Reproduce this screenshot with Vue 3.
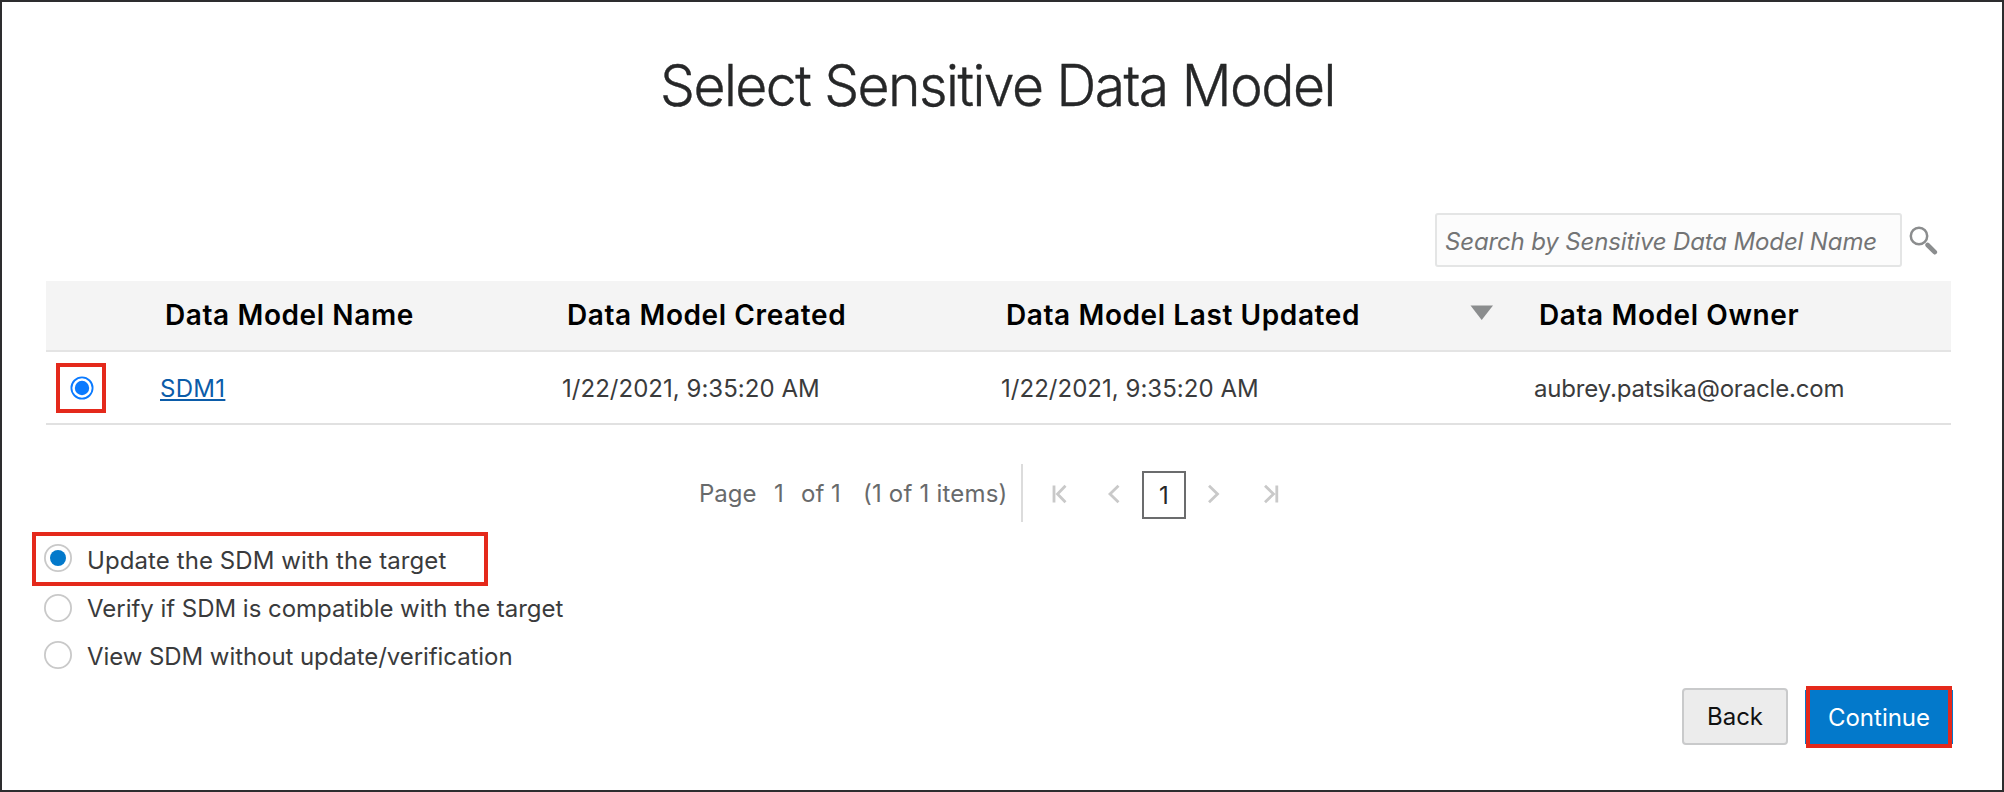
<script setup>
import { ref } from 'vue'

const model = ref('SDM1')
const action = ref('update')
const actions = [
  { id: 'update', label: 'Update the SDM with the target' },
  { id: 'verify', label: 'Verify if SDM is compatible with the target' },
  { id: 'view', label: 'View SDM without update/verification' }
]
const rows = [
  { name: 'SDM1', created: '1/22/2021, 9:35:20 AM', updated: '1/22/2021, 9:35:20 AM', owner: 'aubrey.patsika@oracle.com' }
]
</script>

<template>
  <main class="page">
    <h1><span class="title">Select Sensitive Data Model</span></h1>

    <div class="search">
      <div class="search-box">Search by Sensitive Data Model Name</div>
      <svg class="search-icon" width="30" height="30" viewBox="0 0 30 30">
        <circle cx="11" cy="11" r="8.2" fill="none" stroke="#8b8d8e" stroke-width="2.5" />
        <path d="M19.6 20L26.8 27.2" stroke="#8b8d8e" stroke-width="4.6" stroke-linecap="round" />
      </svg>
    </div>

    <section class="table">
      <div class="row head">
        <span></span>
        <b>Data Model Name</b>
        <b>Data Model Created</b>
        <div class="sorted">
          <b>Data Model Last Updated</b>
          <svg width="24" height="16" viewBox="0 0 24 16"><path d="M0.5 0.5H23L11.7 15Z" fill="#8b8d8e" /></svg>
        </div>
        <b>Data Model Owner</b>
      </div>
      <div v-for="r in rows" :key="r.name" class="row body">
        <span class="mark">
          <svg width="24" height="24" viewBox="0 0 24 24" @click="model = r.name">
            <circle cx="12" cy="12" r="10.6" fill="#fff" stroke="#0a7aff" stroke-width="1.8" />
            <circle v-if="model === r.name" cx="12" cy="12" r="7.2" fill="#0a7aff" />
          </svg>
        </span>
        <span class="cell"><a class="link">{{ r.name }}</a></span>
        <span class="cell date">{{ r.created }}</span>
        <span class="cell date">{{ r.updated }}</span>
        <span class="cell mail">{{ r.owner }}</span>
      </div>
    </section>

    <nav class="pager">
      <div class="summary">
        <span class="page-word">Page</span><span class="page-no">1</span><span class="of">of 1</span><span class="items">(1 of 1 items)</span>
      </div>
      <svg class="first" width="16" height="20" viewBox="0 0 16 20"><path d="M2 1.5V18.5M13.5 1.8L5.5 10L13.5 18.2" /></svg>
      <svg class="prev" width="14" height="20" viewBox="0 0 14 20"><path d="M11.5 1.8L3 10L11.5 18.2" /></svg>
      <span class="current">1</span>
      <svg class="next" width="14" height="20" viewBox="0 0 14 20"><path d="M2 1.8L10.5 10L2 18.2" /></svg>
      <svg class="last" width="16" height="20" viewBox="0 0 16 20"><path d="M13.8 1.5V18.5M2 1.8L10.5 10L2 18.2" /></svg>
    </nav>

    <section class="options">
      <label v-for="a in actions" :key="a.id" :class="['option', a.id]" @click="action = a.id">
        <svg width="30" height="30" viewBox="0 0 30 30">
          <circle cx="15" cy="15" r="13.1" fill="#fff" stroke="#c9c9c9" stroke-width="1.8" />
          <circle v-if="action === a.id" cx="15" cy="15" r="8" fill="#0379cb" />
        </svg>
        <span class="label">{{ a.label }}</span>
      </label>
    </section>

    <footer>
      <button class="back">Back</button>
      <button class="continue">Continue</button>
    </footer>
  </main>
</template>

<style>
body { background: #fff; }
</style>

<style scoped>
* { box-sizing: border-box; }
.page {
  width: 2004px; height: 792px; border: 2px solid #2d2d2f; background: #fff;
  font-family: Inter, "Liberation Sans", sans-serif; font-size: 24px; color: #3a3b3c;
  display: flex; flex-direction: column; overflow: hidden; white-space: nowrap;
}
svg { display: block; flex: none; }
h1 { margin: 48px 0 0; padding-left: 658px; height: 70px; line-height: 71px; font-size: 57px; font-weight: 350; color: #262728; }
.title { display: inline-block; letter-spacing: -1.58px; transform: scaleX(0.97); transform-origin: left; -webkit-text-stroke: 0.4px #262728; }
.search { margin: 93px 0 0 1433px; height: 54px; display: flex; }
.search-box { width: 467px; height: 54px; padding: 2px 0 0 8px; border: 2px solid #e4e5e5; border-radius: 3px; background: #fcfcfc; color: #737475; font-style: italic; line-height: 50px; letter-spacing: -0.14px; }
.search-icon { margin: 12px 0 0 6px; }
.table { margin: 14px 0 0 44px; width: 1905px; }
.row { display: grid; grid-template-columns: 114px 402px 439px 533px 1fr; align-items: center; }
.head { height: 71px; background: #f4f4f4; border-bottom: 2px solid #e4e4e4; font-size: 28px; letter-spacing: 0.6px; color: #000; padding: 0 0 2px 5px; }
.head b { font-weight: 600; }
.sorted { display: flex; align-items: center; justify-content: space-between; padding-right: 45px; }
.sorted svg { margin-bottom: 3px; }
.body { height: 73px; border-bottom: 2px solid #e1e1e1; }
.cell { padding-top: 2px; }
.date { letter-spacing: 0.03px; }
.mail { letter-spacing: -0.17px; }
.mark { display: flex; align-items: center; justify-content: center; width: 50px; height: 50px; margin-left: 10px; padding-left: 1px; border: 4px solid #e4291b; }
.link { color: #0b5ca9; letter-spacing: 0.3px; text-decoration: underline; text-decoration-thickness: 2px; text-underline-offset: 2px; }
.pager { margin: 39px 0 0 697px; height: 58px; display: flex; align-items: center; color: #686a6b; }
.summary { width: 324px; height: 58px; line-height: 60px; border-right: 2px solid #dcdcdc; display: flex; }
.pager svg { margin-top: 2px; fill: none; stroke: #c9c9c9; stroke-width: 2.8; }
.page-word { width: 75px; }
.page-no { width: 27px; }
.of { width: 62px; }
.items { letter-spacing: 0.2px; }
.pager .first { margin-left: 29px; }
.pager .prev { margin-left: 39px; }
.current { width: 44px; height: 48px; margin: 3px 0 0 21px; border: 2px solid #6b6c6d; color: #262728; text-align: center; line-height: 46px; }
.pager .next { margin-left: 21px; }
.pager .last { margin-left: 42px; }
.options { margin: 10px 0 0 30px; width: 600px; }
.option { height: 44px; display: flex; align-items: center; padding-left: 11px; gap: 14px; }
.option.update { height: 54px; width: 456px; border: 4px solid #e4291b; padding-left: 7px; letter-spacing: 0.09px; }
.option.update svg { margin-bottom: 2px; }
.option.update .label { padding-top: 3px; }
.option.verify { letter-spacing: -0.03px; }
.option.view { height: 50px; letter-spacing: -0.07px; }
.option.view .label { padding-top: 3px; }
footer { margin: 6px 50px 0 0; display: flex; justify-content: flex-end; gap: 18px; }
button { font: inherit; padding: 0; text-align: center; }
.back { width: 106px; height: 57px; border: 2px solid #c9cacb; border-radius: 4px; background: #ececec; color: #111; margin-top: 2px; }
.continue { width: 146px; height: 62px; background: #0379cb; border: 4px solid #e4291b; color: #fff; box-shadow: 5px 0 0 -4px #0379cb, -5px 0 0 -4px #0379cb; }
</style>
